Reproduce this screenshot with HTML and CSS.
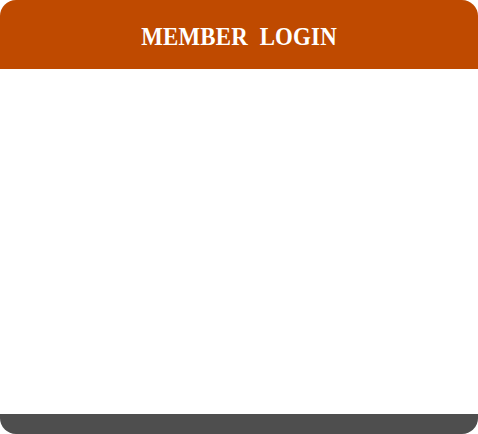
FILE: index.html
```html
<!DOCTYPE html>
<html>
<head>
<meta charset="utf-8">
<link rel="stylesheet" href="styles.css">
</head>
<body>
<div class="panel">
  <div class="panel-header"><h1 class="panel-title">MEMBER&nbsp; LOGIN</h1></div>
  <div class="panel-body"></div>
  <div class="panel-footer"></div>
</div>
</body>
</html>
```
FILE: styles.css
```css
html, body { margin: 0; padding: 0; background: #fff; }
.panel {
  width: 478px;
  height: 434px;
  display: flex;
  flex-direction: column;
}
.panel-header {
  height: 69px;
  box-sizing: border-box;
  padding-top: 5px;
  background: #bf4a00;
  border-radius: 16px 16px 0 0;
  display: flex;
  align-items: center;
  justify-content: center;
}
.panel-title {
  margin: 0;
  color: #fff;
  font-family: "Liberation Serif", serif;
  font-weight: bold;
  font-size: 26px;
  letter-spacing: 0.2px;
  transform: scaleX(0.88);
}
.panel-body { flex: 1; background: #fff; }
.panel-footer {
  height: 20px;
  background: #4e4e4e;
  border-radius: 0 0 16px 16px;
}
```
